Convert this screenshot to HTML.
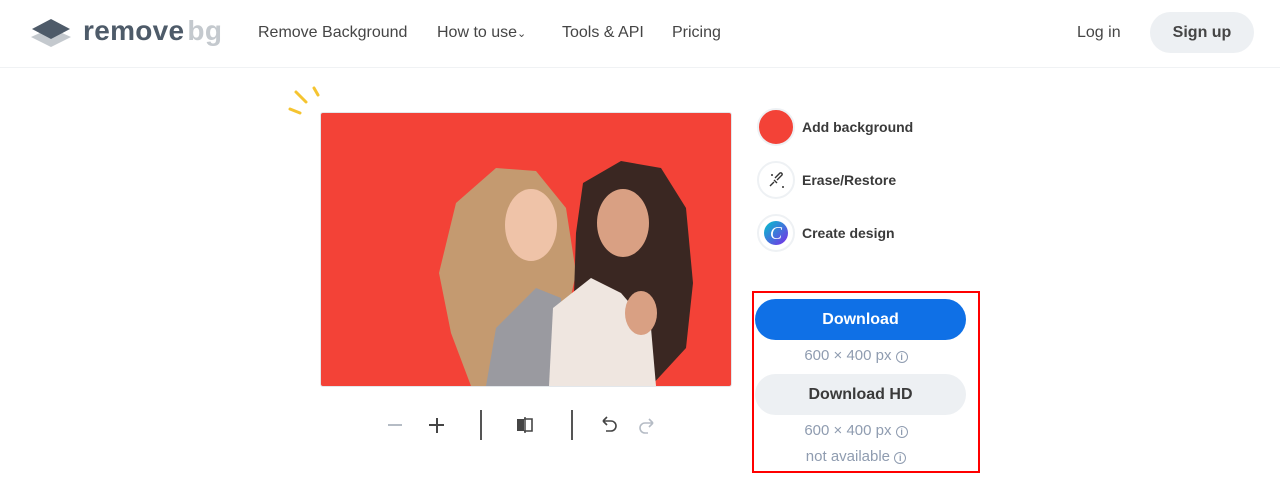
<!DOCTYPE html>
<html><head><meta charset="utf-8"><style>
*{margin:0;padding:0;box-sizing:border-box}
body{width:1280px;height:500px;background:#fff;font-family:"Liberation Sans",sans-serif;position:relative;overflow:hidden;color:#454545}
.a{position:absolute}
.nav{font-size:16px;color:#454545;top:24px}
.circ{width:38px;height:38px;border-radius:50%;border:2px solid #eef1f4;left:757px;background:#fff}
.lbl{left:802px;font-size:14px;font-weight:bold;color:#3a3a3a}
.sub{width:210px;left:751px;text-align:center;font-size:15px;color:#8f9cb0}
.i{display:inline-block;width:12px;height:12px;border:1.3px solid #8f9cb0;border-radius:50%;font-size:9px;line-height:10px;text-align:center;vertical-align:0px;font-weight:bold}
</style></head><body>
<div class="a" style="top:67px;left:0;width:1280px;height:1px;background:#f0f2f4"></div>
<svg class="a" style="left:29px;top:18px" width="44" height="30"><polygon points="22,10 42,19 22,29 2,19" fill="#c4c9ce"/><polygon points="22,1 41,11 22,21 3,11" fill="#4e5b69"/></svg>
<div class="a" style="left:83px;top:15px;font-size:28px;font-weight:bold;color:#4e5b69;letter-spacing:0.3px">remove<span style="color:#c4c9ce;margin-left:3px">bg</span></div>
<div class="a nav" style="left:258px">Remove Background</div>
<div class="a nav" style="left:437px">How to use<span style="font-size:11px">&#8964;</span></div>
<div class="a nav" style="left:562px">Tools &amp; API</div>
<div class="a nav" style="left:672px">Pricing</div>
<div class="a nav" style="left:1077px">Log in</div>
<div class="a" style="left:1150px;top:12px;width:104px;height:41px;border-radius:21px;background:#edf0f3;font-size:16px;font-weight:bold;color:#454545;text-align:center;line-height:41px">Sign up</div>
<svg class="a" style="left:286px;top:84px" width="40" height="34"><g stroke="#f5c430" stroke-width="3" stroke-linecap="round"><line x1="10" y1="8" x2="20" y2="18"/><line x1="28" y1="4" x2="32" y2="11"/><line x1="4" y1="25" x2="14" y2="29"/></g></svg>
<div class="a" style="left:320px;top:112px;width:412px;height:275px;border:1px solid #e3e7eb;border-radius:3px;background:#f34237;overflow:hidden">
<svg width="410" height="273" style="position:absolute;left:0;top:0">
<path d="M150 273 L130 220 L118 160 L135 90 L175 55 L215 58 L245 95 L255 160 L240 230 L230 273Z" fill="#c49a70"/>
<path d="M255 120 L262 70 L300 48 L340 55 L365 95 L372 170 L365 235 L330 273 L250 273Z" fill="#3a2722"/>
<ellipse cx="210" cy="112" rx="26" ry="36" fill="#efc3a8"/>
<ellipse cx="302" cy="110" rx="26" ry="34" fill="#d9a083"/>
<path d="M165 273 L175 215 L215 175 L240 185 L245 273Z" fill="#9a9aa0"/>
<path d="M228 273 L232 195 L270 165 L300 180 L330 215 L335 273Z" fill="#efe6e0"/>
<ellipse cx="320" cy="200" rx="16" ry="22" fill="#d9a083"/>
</svg></div>
<div class="a" style="left:388px;top:424px;width:14px;height:1.5px;background:#b5bcc5"></div>
<div class="a" style="left:429px;top:424px;width:15px;height:2px;background:#454545"></div>
<div class="a" style="left:435.5px;top:418px;width:2px;height:15px;background:#454545"></div>
<div class="a" style="left:480px;top:410px;width:1.5px;height:30px;background:#555"></div>
<svg class="a" style="left:515px;top:416px" width="20" height="18"><rect x="2" y="3" width="7" height="12" fill="#454545"/><path d="M9 3h8v12h-8" fill="none" stroke="#454545" stroke-width="1.6"/><line x1="10" y1="1" x2="10" y2="17" stroke="#454545" stroke-width="1.5"/></svg>
<div class="a" style="left:571px;top:410px;width:1.5px;height:30px;background:#555"></div>
<svg class="a" style="left:598px;top:416px" width="60" height="18"><path d="M5 5h8a5 5 0 0 1 0 10h-5M5 5l4-4M5 5l4 4" fill="none" stroke="#454545" stroke-width="1.6"/><path d="M57 8h-8a5 5 0 0 0 0 10h3M57 8l-4-4M57 8l-4 4" fill="none" stroke="#b5bcc5" stroke-width="1.6" transform="translate(-2,-1)"/></svg>
<div class="a circ" style="top:108px;background:#f34237;border-color:#eef1f4"></div>
<div class="a lbl" style="top:119px">Add background</div>
<div class="a circ" style="top:161px"><svg width="34" height="34"><path d="M11 23l4-4m1-4l5-5a1.5 1.5 0 0 1 2 2l-5 5m-3 0l3 3" fill="none" stroke="#333" stroke-width="1.4"/><circle cx="13" cy="12" r="1" fill="#333"/><circle cx="24" cy="24" r="1" fill="#333"/></svg></div>
<div class="a lbl" style="top:172px">Erase/Restore</div>
<div class="a circ" style="top:214px;padding:5px"><div style="width:24px;height:24px;border-radius:50%;background:linear-gradient(135deg,#00c4cc,#7d2ae8);color:#fff;font-family:'Liberation Serif',serif;font-style:italic;font-size:18px;text-align:center;line-height:24px">C</div></div>
<div class="a lbl" style="top:225px">Create design</div>
<div class="a" style="left:752px;top:291px;width:228px;height:182px;border:2px solid #f00"></div>
<div class="a" style="left:755px;top:299px;width:211px;height:41px;border-radius:21px;background:#0f70e6;color:#fff;font-weight:bold;font-size:16px;text-align:center;line-height:41px">Download</div>
<div class="a sub" style="top:347px">600 × 400 px <span class="i">i</span></div>
<div class="a" style="left:755px;top:374px;width:211px;height:41px;border-radius:21px;background:#edf0f3;color:#3a3a3a;font-weight:bold;font-size:16px;text-align:center;line-height:41px">Download HD</div>
<div class="a sub" style="top:422px">600 × 400 px <span class="i">i</span></div>
<div class="a sub" style="top:448px">not available <span class="i">i</span></div>
</body></html>
